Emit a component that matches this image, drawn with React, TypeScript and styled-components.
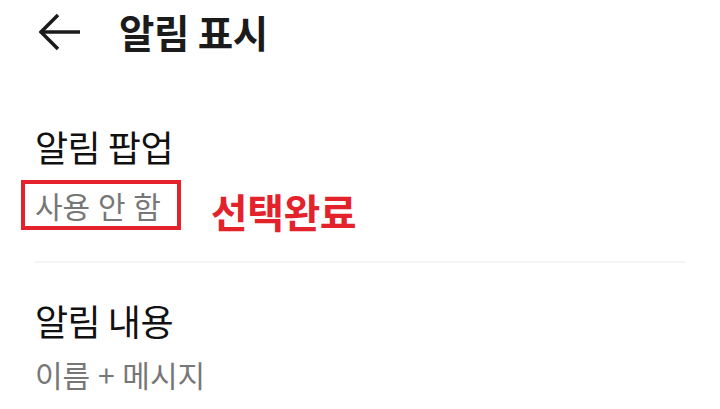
import styled, { createGlobalStyle } from "styled-components"

const GlobalStyle = createGlobalStyle`
  html, body {
    margin: 0;
    padding: 0;
    background: #ffffff;
  }
  body {
    font-family: "Noto Sans CJK KR", "Noto Sans", sans-serif;
  }
`

const Page = styled.div`
  width: 720px;
  height: 409px;
  overflow: hidden;
  background: #fff;
  display: flex;
  flex-direction: column;
`

const Header = styled.div`
  display: flex;
  align-items: center;
  height: 62px;
  padding-left: 39px;
  gap: 38px;
`

const BackButton = styled.button`
  display: flex;
  align-items: center;
  justify-content: center;
  width: 42px;
  height: 38px;
  padding: 0;
  margin-top: 2px;
  border: none;
  background: none;
  color: #1a1a1a;
`

const HeaderTitle = styled.h1`
  margin: 0;
  font-size: 38.5px;
  font-weight: 700;
  color: #1b1b1b;
  letter-spacing: -0.3px;
`

const List = styled.div`
  display: flex;
  flex-direction: column;
  padding: 0 35px;
`

const Item = styled.div<{ $top: number }>`
  display: flex;
  flex-direction: column;
  padding-top: ${(p) => p.$top}px;
`

const ItemTitle = styled.div`
  font-size: 36px;
  line-height: 48px;
  color: #111;
  letter-spacing: -0.5px;
`

const SubRow = styled.div<{ $offset?: number }>`
  display: flex;
  align-items: center;
  gap: 30px;
  min-height: 50px;
  margin-top: ${(p) => p.$offset ?? 0}px;
`

const SubText = styled.div`
  font-size: 30px;
  line-height: 40px;
  color: #777;
  word-spacing: 1px;
`

const Highlight = styled.span`
  display: inline-flex;
  align-items: center;
  margin-left: -14px;
  padding: 0 16px 0 10px;
  border: 4px solid #e4222c;
  height: 50px;
  box-sizing: border-box;
`

const Note = styled.span`
  font-size: 40px;
  font-weight: 700;
  color: #e4222c;
  margin-top: 12px;
  letter-spacing: -0.5px;
`

const Divider = styled.div`
  height: 2px;
  background: #f4f4f4;
  margin-top: 21px;
`

export default function App() {
  return (
    <>
      <GlobalStyle />
      <Page>
        <Header>
          <BackButton aria-label="back">
            <svg width="42" height="38" viewBox="0 0 42 38" fill="none">
              <path d="M2 19 H41" stroke="currentColor" strokeWidth="3.5" />
              <path d="M19 2 L2 19 L19 36" stroke="currentColor" strokeWidth="3.5" />
            </svg>
          </BackButton>
          <HeaderTitle>알림 표시</HeaderTitle>
        </Header>
        <List>
          <Item $top={60}>
            <ItemTitle>알림 팝업</ItemTitle>
            <SubRow>
              <Highlight>
                <SubText>사용 안 함</SubText>
              </Highlight>
              <Note>선택완료</Note>
            </SubRow>
            <Divider />
          </Item>
          <Item $top={33}>
            <ItemTitle>알림 내용</ItemTitle>
            <SubRow $offset={5}>
              <SubText>이름 + 메시지</SubText>
            </SubRow>
          </Item>
        </List>
      </Page>
    </>
  )
}
